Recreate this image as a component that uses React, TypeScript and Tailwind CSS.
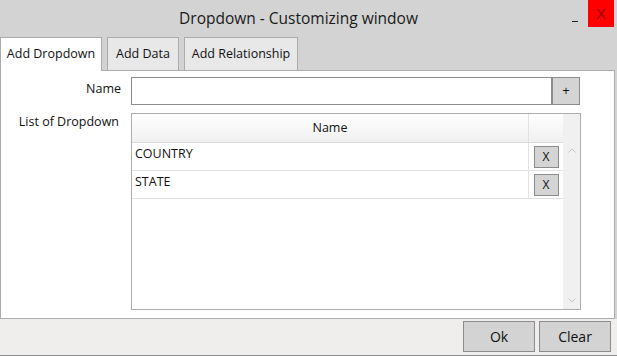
const FONT = "font-['Open_Sans',sans-serif]";

const ROWS = ['COUNTRY', 'STATE'];

function Tab({ label, width, active }: { label: string; width: string; active?: boolean }) {
  if (active) {
    return (
      <div className={`relative z-10 -mb-px flex h-[34px] ${width} items-center justify-center border border-b-0 border-[#acacac] bg-white pb-[1px] text-[12.5px] text-[#111]`}>
        {label}
      </div>
    );
  }
  return (
    <div className={`flex h-[33px] ${width} items-center justify-center border border-b-0 border-[#acacac] bg-[#e8e8e8] text-[12.5px] text-[#111]`}>
      {label}
    </div>
  );
}

export default function App() {
  return (
    <div className={`${FONT} flex h-[356px] w-[617px] flex-col overflow-hidden bg-[#d3d3d3]`}>
      {/* title bar */}
      <div className="relative flex h-[37px] shrink-0 items-center justify-center pr-[20px]">
        <span className="pt-[1px] text-[15.5px] text-[#1a1a1a]">Dropdown - Customizing window</span>
        <span className="absolute left-[572px] top-[21px] h-px w-[6px] bg-[#222]" />
        <div className="absolute left-[588px] top-0 flex h-[27px] w-[26px] items-center justify-center bg-[#ff0000] pt-[1px] font-['Liberation_Sans',sans-serif] text-[15px] text-[#9b0000]">
          X
        </div>
      </div>

      {/* tabs */}
      <div className="flex h-[33px] shrink-0 items-end gap-[5px]">
        <Tab label="Add Dropdown" width="w-[102px]" active />
        <Tab label="Add Data" width="w-[72px]" />
        <Tab label="Add Relationship" width="w-[114px]" />
      </div>

      {/* content */}
      <div className="flex h-[249px] w-[615px] shrink-0 flex-col border border-[#acacac] bg-white pt-[6px] text-[12.5px] text-[#111]">
        <div className="flex h-[28px] items-stretch">
          <div className="w-[120px] pt-[3px] text-right">Name</div>
          <div className="ml-[10px] w-[421px] border border-[#8c8c8c] bg-white" />
          <div className="flex w-[28px] items-center justify-center border border-[#8c8c8c] bg-[#d4d4d4] text-[13px]">+</div>
        </div>

        <div className="mt-[8px] flex">
          <div className="w-[120px] pr-[2px] text-right">List of Dropdown</div>
          <div className="ml-[10px] flex h-[197px] w-[450px] border border-[#acacac]">
            <div className="flex flex-1 flex-col">
              <div className="flex h-[29px] border-b border-[#dcdcdc] bg-gradient-to-b from-white to-[#f0f0f0]">
                <div className="flex flex-1 items-center justify-center border-r border-[#e2e2e2]">Name</div>
                <div className="w-[34px]" />
              </div>
              {ROWS.map((r) => (
                <div key={r} className="flex h-[28px] border-b border-[#e2e2e2]">
                  <div className="flex flex-1 items-start border-r border-[#e2e2e2] pl-[3px] pt-[2px]">{r}</div>
                  <div className="flex w-[34px] items-center justify-center">
                    <div className="flex h-[22px] w-[25px] items-center justify-center border border-[#8c8c8c] bg-[#d4d4d4] text-[12px]">
                      X
                    </div>
                  </div>
                </div>
              ))}
            </div>
            <div className="flex w-[17px] flex-col items-center justify-between bg-[#f0f0f0] pb-[6px] pt-[34px]">
              <svg width="8" height="5" viewBox="0 0 8 5">
                <path d="M0.5 4.5 L4 1 L7.5 4.5" fill="none" stroke="#c8c8c8" strokeWidth="1" />
              </svg>
              <svg width="8" height="5" viewBox="0 0 8 5">
                <path d="M0.5 0.5 L4 4 L7.5 0.5" fill="none" stroke="#c8c8c8" strokeWidth="1" />
              </svg>
            </div>
          </div>
        </div>
      </div>

      {/* footer */}
      <div className="flex flex-1 items-start justify-end gap-[4px] border-b border-[#8c8c8c] bg-[#f0eded] pr-[6px] pt-[2px]">
        <button className="h-[31px] w-[72px] border border-[#8c8c8c] bg-[#d3d3d3] text-[14px] text-[#111]">Ok</button>
        <button className="h-[31px] w-[72px] border border-[#8c8c8c] bg-[#d3d3d3] text-[14px] text-[#111]">Clear</button>
      </div>
    </div>
  );
}
